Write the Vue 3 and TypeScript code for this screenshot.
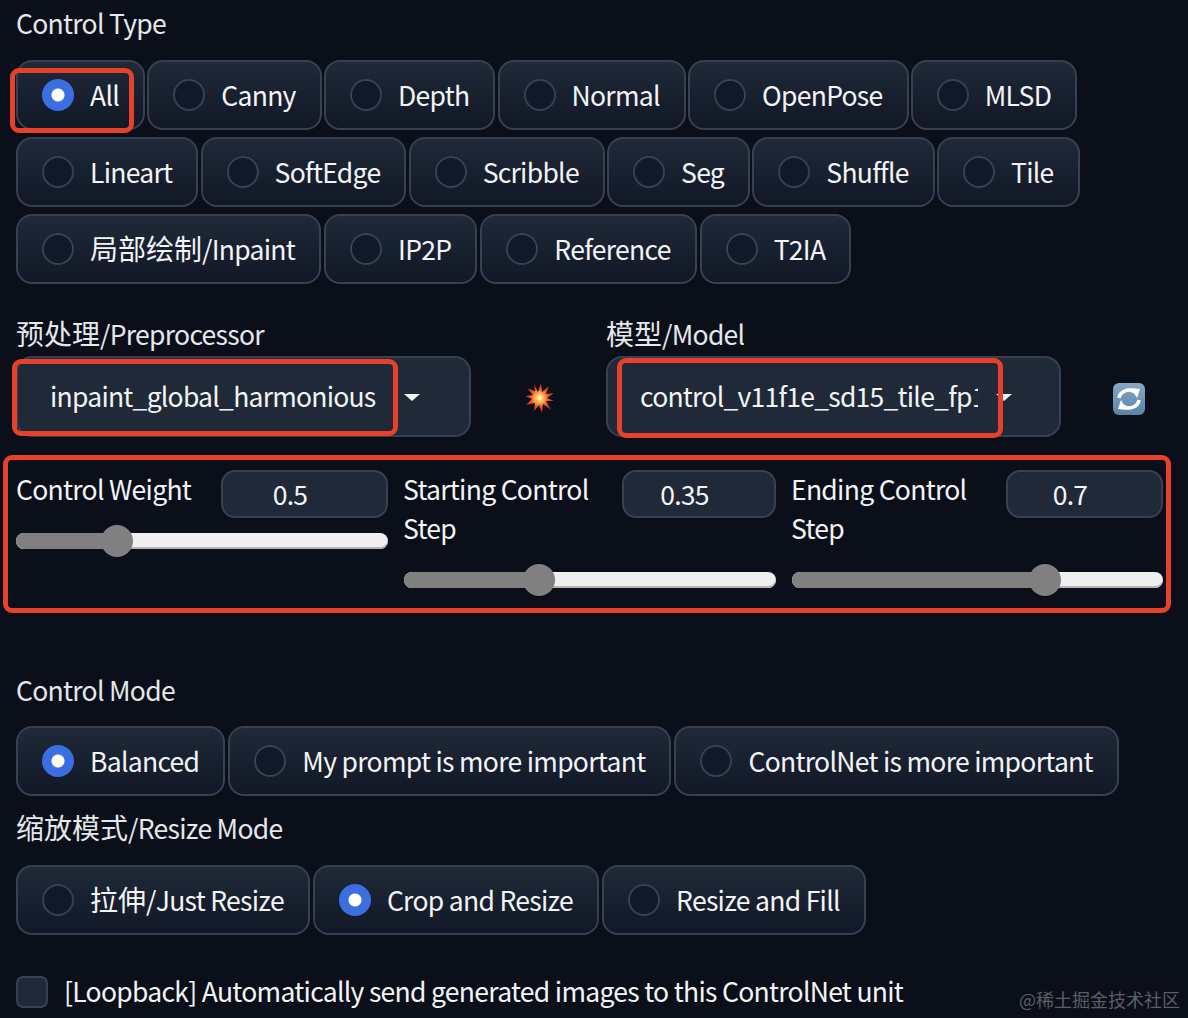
<script setup lang="ts">
interface Opt { cjk?: string; label: string; on?: boolean }
const typeRows: Opt[][] = [
  [{ label: 'All', on: true }, { label: 'Canny' }, { label: 'Depth' }, { label: 'Normal' }, { label: 'OpenPose' }, { label: 'MLSD' }],
  [{ label: 'Lineart' }, { label: 'SoftEdge' }, { label: 'Scribble' }, { label: 'Seg' }, { label: 'Shuffle' }, { label: 'Tile' }],
  [{ cjk: '局部绘制', label: '/Inpaint' }, { label: 'IP2P' }, { label: 'Reference' }, { label: 'T2IA' }],
]
const modes: Opt[] = [{ label: 'Balanced', on: true }, { label: 'My prompt is more important' }, { label: 'ControlNet is more important' }]
const resize: Opt[] = [{ cjk: '拉伸', label: '/Just Resize' }, { label: 'Crop and Resize', on: true }, { label: 'Resize and Fill' }]
const sliders = [
  { name: 'Control Weight', value: '0.5', pct: 27.2, input: 167 },
  { name: 'Starting Control Step', value: '0.35', pct: 36.4, input: 154 },
  { name: 'Ending Control Step', value: '0.7', pct: 68.3, input: 157 },
]
</script>

<template>
  <div class="page">
    <div class="label first">Control Type</div>
    <div class="rows">
      <div v-for="(row, i) in typeRows" :key="i" class="row">
        <label v-for="o in row" :key="o.label" class="opt">
          <span class="radio" :class="{ on: o.on }"></span>
          <span><span v-if="o.cjk" class="cjk">{{ o.cjk }}</span>{{ o.label }}</span>
        </label>
      </div>
    </div>

    <div class="selects">
      <div class="sel-col">
        <div class="label"><span class="cjk">预处理</span>/Preprocessor</div>
        <div class="select"><span class="sel-text">inpaint_global_harmonious</span><span class="arrow"></span></div>
      </div>
      <div class="tool">
        <svg width="32" height="32" viewBox="0 0 32 32">
          <defs>
            <radialGradient id="boom" cx="50%" cy="50%" r="50%">
              <stop offset="0" stop-color="#fff8d0" />
              <stop offset="0.25" stop-color="#ffc45a" />
              <stop offset="0.6" stop-color="#f0562a" />
              <stop offset="1" stop-color="#b52a1e" />
            </radialGradient>
          </defs>
          <path fill="url(#boom)" d="M10 2l4 8 3-9 1 9 7-6-3 8 8-1-7 5 7 3-8 0 5 9-8-6-1 9-3-8-5 6 1-8-9 2 6-6-7-3 8-1-6-7 8 3z" />
        </svg>
      </div>
      <div class="sel-col">
        <div class="label"><span class="cjk">模型</span>/Model</div>
        <div class="select"><span class="sel-text model">control_v11f1e_sd15_tile_fp16</span><span class="arrow"></span></div>
      </div>
      <div class="tool refresh">
        <svg width="32" height="32" viewBox="0 0 32 32">
          <defs>
            <linearGradient id="tile" x1="0" y1="0" x2="0" y2="1">
              <stop offset="0" stop-color="#86a8c6" />
              <stop offset="1" stop-color="#5a84a6" />
            </linearGradient>
          </defs>
          <rect width="32" height="32" rx="6" fill="url(#tile)" />
          <path d="M6 15a10 9 0 0 1 16-6" fill="none" stroke="#fff" stroke-width="3.6" />
          <path d="M18 5l9 1-3 9z" fill="#fff" />
          <path d="M26 17a10 9 0 0 1-16 6" fill="none" stroke="#fff" stroke-width="3.6" />
          <path d="M14 27l-9-1 3-9z" fill="#fff" />
        </svg>
      </div>
    </div>

    <div class="sliders">
      <div v-for="s in sliders" :key="s.name" class="slider">
        <div class="slider-head">
          <span class="slider-name">{{ s.name }}</span>
          <span class="num" :style="{ width: s.input + 'px' }">{{ s.value }}</span>
        </div>
        <div class="track">
          <div class="fill" :style="{ width: s.pct + '%' }"></div>
          <div class="thumb" :style="{ left: s.pct + '%' }"></div>
        </div>
      </div>
    </div>

    <div class="label mode-label">Control Mode</div>
    <div class="row">
      <label v-for="o in modes" :key="o.label" class="opt">
        <span class="radio" :class="{ on: o.on }"></span>
        <span>{{ o.label }}</span>
      </label>
    </div>

    <div class="label resize-label"><span class="cjk">缩放模式</span>/Resize Mode</div>
    <div class="row">
      <label v-for="o in resize" :key="o.label" class="opt">
        <span class="radio" :class="{ on: o.on }"></span>
        <span><span v-if="o.cjk" class="cjk">{{ o.cjk }}</span>{{ o.label }}</span>
      </label>
    </div>

    <div class="loop">
      <span class="check"></span><span class="loop-text">[Loopback] Automatically send generated images to this ControlNet unit</span>
    </div>

    <div class="mark m-all"></div>
    <div class="mark m-pre"></div>
    <div class="mark m-model"></div>
    <div class="mark m-sliders"></div>
    <div class="watermark">@稀土掘金技术社区</div>
  </div>
</template>

<style>
html, body { margin: 0; background: #0b0f19; }
</style>

<style scoped>
.page {
  position: relative;
  box-sizing: border-box;
  width: 1188px;
  height: 1018px;
  overflow: hidden;
  padding: 3px 16px 0;
  background: #0b0f19;
  color: #f3f4f6;
  font-family: "Noto Sans CJK SC", "Noto Sans", sans-serif;
  font-size: 26.5px;
  letter-spacing: -0.7px;
  line-height: 40px;
}
.cjk { font-size: 28px; letter-spacing: 0; line-height: 1; }
.label { height: 40px; color: #e5e7eb; }
.rows { display: flex; flex-direction: column; gap: 7px; margin-top: 17px; }
.row { display: flex; gap: 3px; }
.rows .row:not(:last-child) { gap: 2.2px; }
.opt {
  box-sizing: border-box;
  display: flex;
  align-items: center;
  gap: 16px;
  height: 70px;
  padding: 0 24px;
  border: 2px solid #374151;
  border-radius: 16px;
  background: linear-gradient(to bottom, #1f2937, #111827);
  white-space: nowrap;
}
.radio {
  box-sizing: border-box;
  flex: none;
  width: 32px;
  height: 32px;
  border: 2px solid #374151;
  border-radius: 50%;
  background: #111827;
}
.radio.on {
  border: none;
  background: radial-gradient(circle, #fff 0 6px, #3b6ee0 7px);
}
.selects { display: flex; margin-top: 30px; }
.sel-col { flex: none; width: 455px; }
.select {
  box-sizing: border-box;
  display: flex;
  align-items: center;
  height: 81px;
  margin-top: 2px;
  padding: 0 0 2px 32px;
  border: 2px solid #374151;
  border-radius: 16px;
  background: #1f2937;
}
.sel-text { white-space: nowrap; overflow: hidden; letter-spacing: -0.75px; }
.sel-text.model { width: 338px; flex: none; }
.arrow {
  flex: none;
  margin: 4px 0 0 28px;
  border-left: 8px solid transparent;
  border-right: 8px solid transparent;
  border-top: 7px solid #f3f4f6;
}
.select .model + .arrow { margin-left: 18px; }
.tool {
  flex: none;
  width: 135px;
  display: flex;
  align-items: center;
  justify-content: center;
  padding: 45px 0 0 3px;
  box-sizing: border-box;
}
.tool.refresh { width: 111px; justify-content: flex-start; padding-left: 52px; padding-top: 47px; }
.sliders { display: grid; grid-template-columns: 372px 372px 371px; column-gap: 16px; margin-top: 33px; }
.slider { display: flex; flex-direction: column; }
.slider-head { display: flex; justify-content: space-between; align-items: flex-start; }
.slider-name { width: 194px; line-height: 39px; margin: -1px 0 0 -1px; }
.slider:first-child .slider-name { margin-left: 0; }
.num {
  box-sizing: border-box;
  height: 48px;
  padding-right: 29px;
  border: 2px solid #374151;
  border-radius: 14px;
  background: #1f2937;
  text-align: center;
  line-height: 43px;
}
.track {
  position: relative;
  height: 16px;
  margin-top: 15px;
  border-radius: 8px;
  background: #efefef;
  box-shadow: inset 0 -2px 0 #b5b5b5;
}
.slider:not(:first-child) .slider-head { height: 93px; }
.slider:not(:first-child) .track { margin-top: 9px; }
.fill { height: 100%; border-radius: 8px 0 0 8px; background: #808080; }
.thumb {
  position: absolute;
  top: -8px;
  width: 32px;
  height: 32px;
  margin-left: -16px;
  border-radius: 50%;
  background: #808080;
}
.mode-label { margin-top: 82px; }
.mode-label + .row { margin-top: 16px; }
.resize-label { margin-top: 12px; }
.resize-label + .row { margin-top: 17px; }
.loop { display: flex; align-items: center; gap: 16px; margin-top: 41px; height: 32px; white-space: nowrap; }
.loop-text { margin-top: -2px; }
.check {
  box-sizing: border-box;
  flex: none;
  width: 32px;
  height: 32px;
  border: 2px solid #374151;
  border-radius: 7px;
  background: #1f2937;
}
.mark {
  position: absolute;
  box-sizing: border-box;
  border: 5px solid #e8412a;
  border-radius: 9px;
  pointer-events: none;
}
.m-all { left: 10px; top: 68px; width: 124px; height: 65px; }
.m-pre { left: 12px; top: 359px; width: 386px; height: 77px; }
.m-model { left: 617px; top: 358px; width: 386px; height: 80px; }
.m-sliders { left: 3px; top: 455px; width: 1168px; height: 158px; }
.watermark {
  position: absolute;
  right: 8px;
  bottom: 6px;
  font-size: 18px;
  letter-spacing: 0;
  line-height: 26px;
  color: #5b5e66;
}
</style>
